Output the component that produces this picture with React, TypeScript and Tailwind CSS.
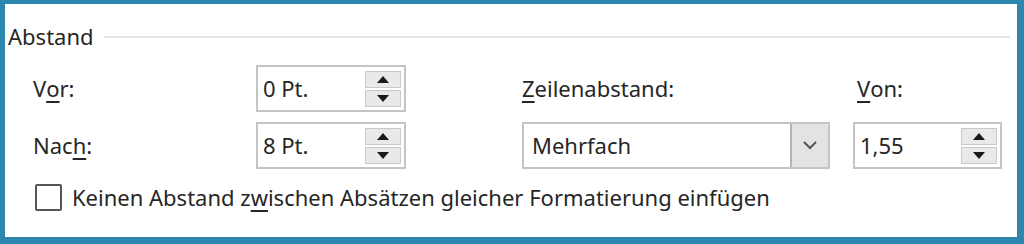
import React from 'react';

const font = { fontFamily: '"Noto Sans", "Open Sans", sans-serif' };

const Arrows = () => (
  <div className="flex flex-col gap-[2px] w-[36px] h-[36px] mr-[3px]">
    <div className="flex-1 flex items-center justify-center bg-[#e9e9e9] border border-[#c9c9c9]">
      <svg width="12" height="7" viewBox="0 0 12 7"><path d="M6 0 L12 7 L0 7 Z" fill="#1a1a1a" /></svg>
    </div>
    <div className="flex-1 flex items-center justify-center bg-[#e9e9e9] border border-[#c9c9c9]">
      <svg width="12" height="7" viewBox="0 0 12 7"><path d="M0 0 L12 0 L6 7 Z" fill="#1a1a1a" /></svg>
    </div>
  </div>
);

const Spin = ({ value, w }: { value: string; w: string }) => (
  <div className={`${w} h-[47px] flex items-center border-2 border-[#c4c4c4] bg-white`}>
    <span className="flex-1 pl-[5px] text-[22px] text-[#262626]">{value}</span>
    <Arrows />
  </div>
);

export default function App() {
  return (
    <div
      className="w-[1024px] h-[244px] bg-white border-t-[4px] border-l-[5px] border-r-[7px] border-b-[7px] border-[#2c86ae] text-[#262626] overflow-hidden"
      style={font}
    >
      <div className="flex items-center pl-[3px] pr-[7px] pt-[19px]">
        <span className="text-[22px] leading-[26px]">Abstand</span>
        <div className="flex-1 h-[2px] bg-[#e4e4e4] ml-[10px] mt-[1px]" />
      </div>

      <div className="grid grid-cols-[223px_150px_116px_308px_23px_149px] grid-rows-[47px_47px] gap-y-[10px] pl-[28px] mt-[16px] text-[22px]">
        <div className="flex items-center">V<span className="underline underline-offset-4">o</span>r:</div>
        <Spin value="0 Pt." w="w-[150px]" />
        <div />
        <div className="flex items-center"><span className="underline underline-offset-4">Z</span>eilenabstand:</div>
        <div />
        <div className="flex items-center pl-[4px]"><span className="underline underline-offset-4">V</span>on:</div>

        <div className="flex items-center">Nac<span className="underline underline-offset-4">h</span>:</div>
        <Spin value="8 Pt." w="w-[150px]" />
        <div />
        <div className="flex items-stretch border-2 border-[#c4c4c4] bg-white">
          <span className="flex-1 flex items-center pl-[8px]">Mehrfach</span>
          <div className="w-[38px] flex items-center justify-center bg-[#e3e3e3] border-l-2 border-[#b4b4b4]">
            <svg width="14" height="9" viewBox="0 0 14 9"><path d="M1 1 L7 7 L13 1" fill="none" stroke="#555" strokeWidth="2" /></svg>
          </div>
        </div>
        <div />
        <Spin value="1,55" w="w-[149px]" />
      </div>

      <div className="flex items-center pl-[30px] mt-[12px] text-[22px]">
        <div className="w-[27px] h-[27px] border-2 border-[#555] rounded-[2px] bg-white" />
        <span className="ml-[10px]">
          Keinen Abstand z<span className="underline underline-offset-4">w</span>ischen Absätzen gleicher Formatierung einfügen
        </span>
      </div>
    </div>
  );
}
